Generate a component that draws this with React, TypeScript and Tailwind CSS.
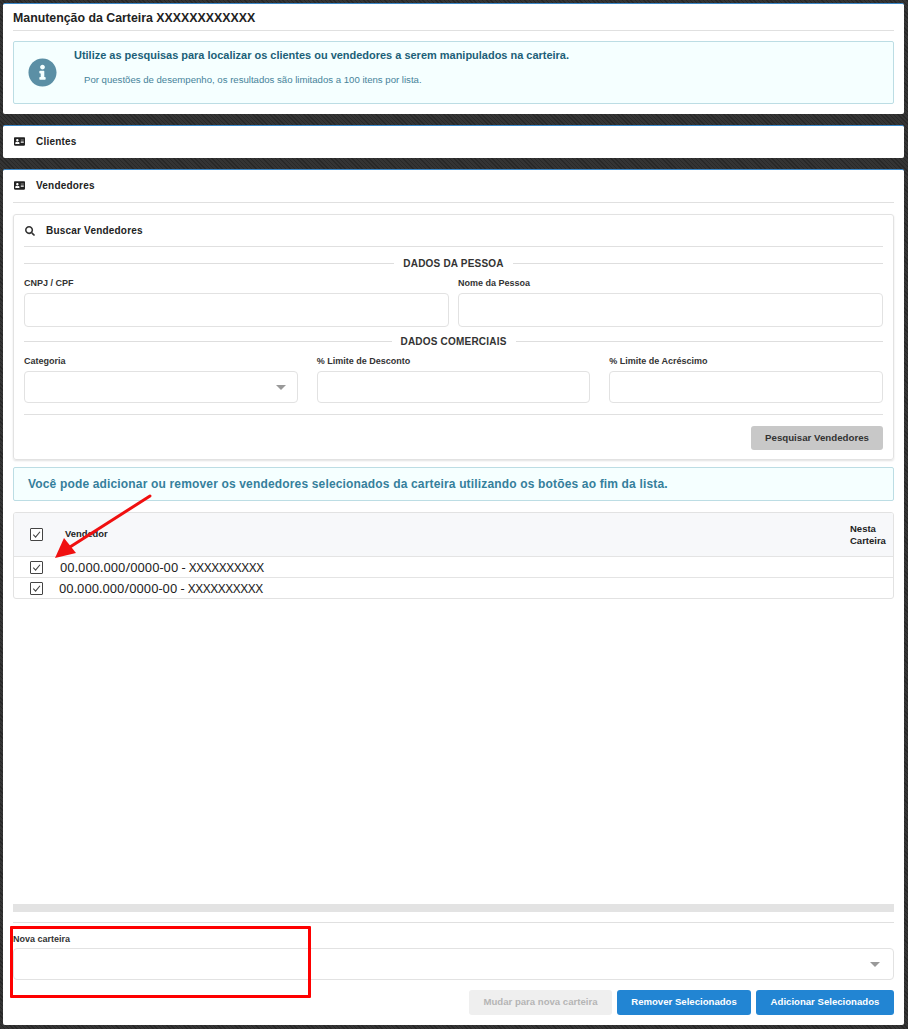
import { FaAddressCard, FaInfoCircle, FaSearch } from 'react-icons/fa';

const inputClass = 'w-full rounded-[4px] border border-[#e2e2e2] bg-white';

function Legend({ title }: { title: string }) {
  return (
    <div className="flex items-center h-[14px]">
      <div className="flex-1 h-px bg-[#dedede]" />
      <span className="px-[9px] text-[10px] font-bold tracking-[0.2px] text-[#333]">{title}</span>
      <div className="flex-1 h-px bg-[#dedede]" />
    </div>
  );
}

function Field({ label, select, height }: { label: string; select?: boolean; height: string }) {
  return (
    <div className="flex-1 min-w-0">
      <div className="h-[14px] text-[9px] leading-[12px] font-bold text-[#333]">{label}</div>
      <div className={`${inputClass} ${height} mt-[2px] relative flex items-center justify-end pr-[11px]`}>
        {select && <Caret />}
      </div>
    </div>
  );
}

function Caret() {
  return <div className="w-0 h-0 border-x-[5px] border-x-transparent border-t-[5px] border-t-[#999]" />;
}

function Check() {
  return (
    <div className="w-[13px] h-[13px] border border-[#444] rounded-[1px] flex items-center justify-center bg-white">
      <svg viewBox="0 0 12 12" className="w-[11px] h-[11px]" fill="none" stroke="#444" strokeWidth="1.2">
        <path d="M2.5 6.2 L5 8.8 L9.8 3" />
      </svg>
    </div>
  );
}

function CardHeader({ title }: { title: string }) {
  return (
    <div className="flex items-center h-full pb-[2px] text-[10px] font-bold tracking-[0.2px] text-[#222]">
      <FaAddressCard className="ml-[1px] w-[11px] h-[11px] text-[#222]" />
      <span className="ml-[11px]">{title}</span>
    </div>
  );
}

function Row({ text, offset }: { text: string; offset: string }) {
  return (
    <div className="flex items-center h-[21px] border-t border-[#e4e4e4]">
      <div className="w-[45px] flex justify-center shrink-0"><Check /></div>
      <span className={`${offset} pt-[1px] text-[12.8px] text-[#222] font-['Noto_Sans',sans-serif]`}>{text}</span>
    </div>
  );
}

export default function App() {
  return (
    <div className="relative w-[908px] h-[1029px] overflow-hidden bg-[repeating-linear-gradient(45deg,#282828_0px,#282828_1px,#343434_1px,#343434_3px)] pl-[3px] pr-[4px] pt-[3px] font-['Liberation_Sans',sans-serif]">
      <div className="h-[111px] bg-white rounded-[2px] border-t border-[#3a87c8] px-[10px]">
        <div className="h-[27px] pt-[3px] flex items-center border-b border-[#e0e0e0] text-[12.35px] font-bold text-[#222]">
          Manutenção da Carteira XXXXXXXXXXXX
        </div>
        <div className="mt-[10px] h-[63px] flex bg-[#f5ffff] border border-[#bcdde4] rounded-[2px]">
          <div className="w-[60px] shrink-0 flex items-center justify-center pr-[3px]">
            <FaInfoCircle className="w-[29px] h-[29px] text-[#5b8fa5]" />
          </div>
          <div>
            <div className="mt-[6px] text-[10.97px] leading-[14px] font-bold text-[#1c5f78]">
              Utilize as pesquisas para localizar os clientes ou vendedores a serem manipulados na carteira.
            </div>
            <div className="mt-[12px] ml-[10px] text-[9.6px] leading-[12px] text-[#46839a]">
              Por questões de desempenho, os resultados são limitados a 100 itens por lista.
            </div>
          </div>
        </div>
      </div>

      <div className="mt-[11px] h-[33px] bg-white rounded-[2px] border-t border-[#3a87c8] px-[10px]">
        <CardHeader title="Clientes" />
      </div>

      <div className="mt-[11px] h-[856px] bg-white rounded-[2px] border-t border-[#3a87c8] px-[10px] pb-[10px] flex flex-col">
        <div className="h-[33px] border-b border-[#e0e0e0] shrink-0">
          <CardHeader title="Vendedores" />
        </div>

        <div className="mt-[11px] h-[246px] shrink-0 border border-[#e2e2e2] rounded-[3px] px-[10px] shadow-[0_1px_2px_rgba(0,0,0,0.12)]">
          <div className="h-[32px] flex items-center border-b border-[#e0e0e0] text-[10px] font-bold tracking-[0.2px] text-[#222]">
            <FaSearch className="ml-[1px] w-[10px] h-[10px] text-[#333]" />
            <span className="ml-[11px]">Buscar Vendedores</span>
          </div>
          <div className="mt-[9px]"><Legend title="DADOS DA PESSOA" /></div>
          <div className="mt-[7px] flex gap-[9px]">
            <Field label="CNPJ / CPF" height="h-[34px]" />
            <Field label="Nome da Pessoa" height="h-[34px]" />
          </div>
          <div className="mt-[7px]"><Legend title="DADOS COMERCIAIS" /></div>
          <div className="mt-[7px] flex gap-[19px]">
            <Field label="Categoria" select height="h-[32px]" />
            <Field label="% Limite de Desconto" height="h-[32px]" />
            <Field label="% Limite de Acréscimo" height="h-[32px]" />
          </div>
          <div className="mt-[11px] border-t border-[#e0e0e0] pt-[11px] flex justify-end">
            <button className="w-[132px] h-[24px] bg-[#c8c8c8] rounded-[3px] text-[9.7px] font-bold text-[#333]">
              Pesquisar Vendedores
            </button>
          </div>
        </div>

        <div className="mt-[7px] h-[34px] shrink-0 flex items-center bg-[#f5ffff] border border-[#bcdde4] rounded-[2px] pl-[14px] text-[12px] font-bold tracking-[0.16px] text-[#35809c]">
          Você pode adicionar ou remover os vendedores selecionados da carteira utilizando os botões ao fim da lista.
        </div>

        <div className="mt-[11px] h-[87px] shrink-0 border border-[#e2e2e2] rounded-[3px] overflow-hidden">
          <div className="h-[43px] bg-[#f7f8fa] flex items-center">
            <div className="w-[45px] flex justify-center shrink-0"><Check /></div>
            <span className="ml-[6px] flex-1 text-[9.4px] font-bold text-[#222]">Vendedor</span>
            <span className="w-[43px] text-[9.5px] leading-[12px] font-bold text-[#222]">Nesta Carteira</span>
          </div>
          <Row text="00.000.000/0000-00 - XXXXXXXXXX" offset="ml-[1px]" />
          <Row text="00.000.000/0000-00 - XXXXXXXXXX" offset="ml-0" />
        </div>

        <div className="flex-1" />
        <div className="h-[8px] shrink-0 bg-[#e3e3e3]" />
        <div className="mt-[10px] h-px shrink-0 bg-[#e0e0e0]" />

        <div className="mt-[10px] h-[13px] shrink-0 text-[9px] leading-[13px] font-bold text-[#333]">Nova carteira</div>
        <div className={`${inputClass} mt-[2px] h-[32px] shrink-0 flex items-center justify-end pr-[13px]`}>
          <Caret />
        </div>
        <div className="mt-[10px] flex justify-end gap-[5px] shrink-0 text-[9.6px] font-bold">
          <button className="w-[143px] h-[25px] rounded-[3px] bg-[#efefef] text-[#b5b5b5]">Mudar para nova carteira</button>
          <button className="w-[134px] h-[25px] rounded-[3px] bg-[#2285d3] text-white">Remover Selecionados</button>
          <button className="w-[138px] h-[25px] rounded-[3px] bg-[#2285d3] text-white">Adicionar Selecionados</button>
        </div>
      </div>

      {/* annotations on top of the screenshot */}
      <div className="absolute left-[10px] top-[926px] w-[301px] h-[72px] border-[3px] border-[#fe0000] rounded-[1px]" />
      <svg className="absolute left-0 top-0 pointer-events-none" width="908" height="1029" fill="none">
        <path d="M150 496 L70 547" stroke="#f01010" strokeWidth="3" strokeLinecap="round" />
        <path d="M55 558 L64 538 L76 553 Z" fill="#f01010" />
      </svg>
    </div>
  );
}
